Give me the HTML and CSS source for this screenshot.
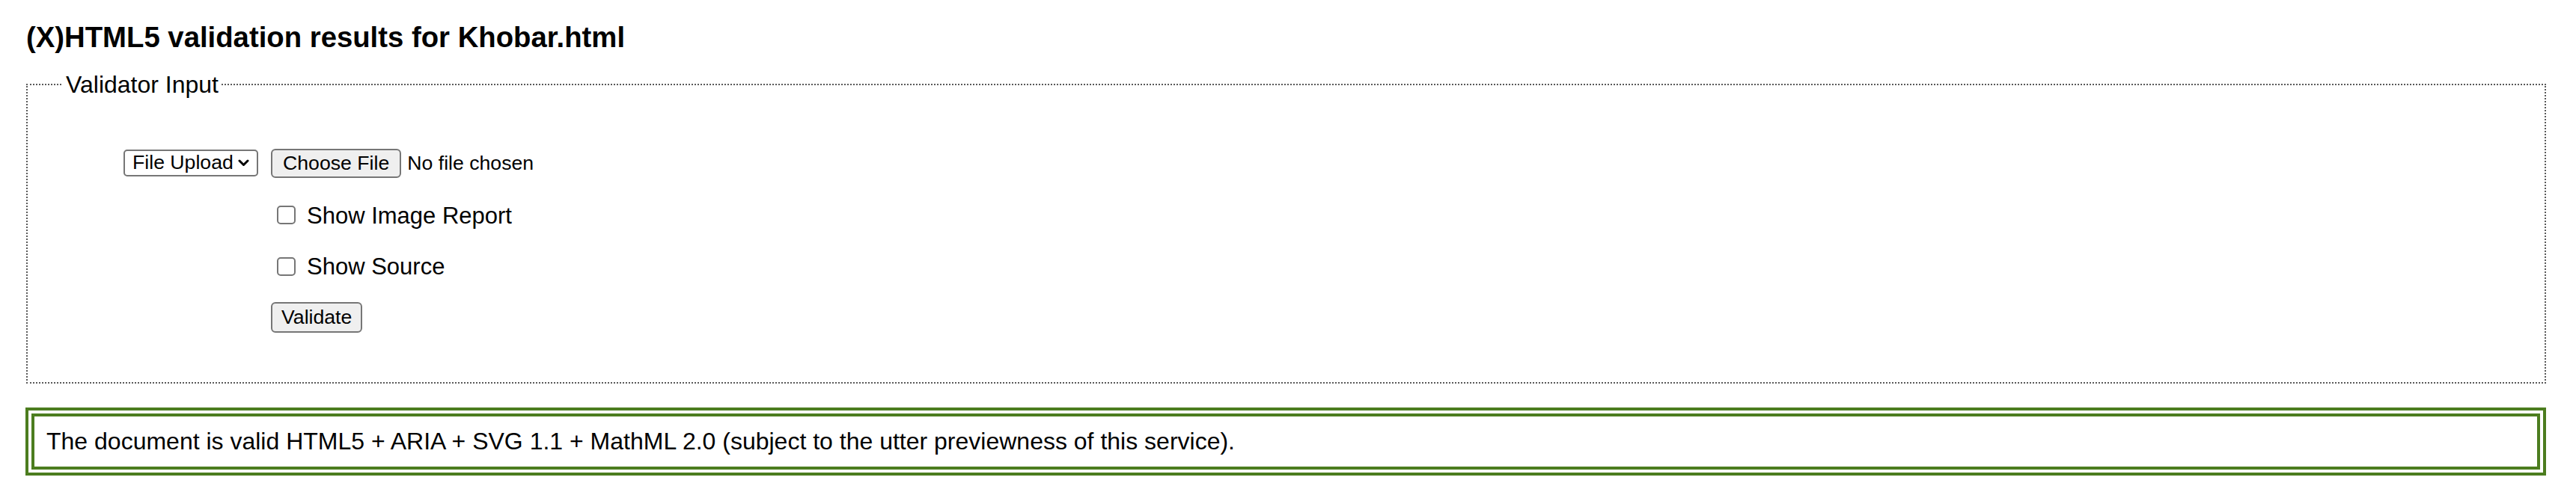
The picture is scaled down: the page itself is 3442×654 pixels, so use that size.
FILE: index.html
```html
<!DOCTYPE html>
<html lang="en">
<head>
<meta charset="utf-8">
<title>(X)HTML5 validation results for Khobar.html</title>
<link rel="stylesheet" href="styles.css">
</head>
<body>
<h1 class="title">(X)HTML5 validation results for Khobar.html</h1>
<fieldset class="input-box">
  <legend class="input-legend">Validator Input</legend>
  <div class="form-grid">
    <div class="source-cell">
      <div class="select"><span class="select-text">File Upload</span><svg class="chev" width="15" height="10" viewBox="0 0 15 10"><path d="M2 2 L7.5 7.5 L13 2" fill="none" stroke="#000" stroke-width="3" stroke-linecap="round" stroke-linejoin="round"/></svg></div>
    </div>
    <div class="controls">
      <div class="file-row"><button class="btn btn-file" type="button">Choose File</button><span class="file-status">No file chosen</span></div>
      <label class="check"><span class="box"></span>Show Image Report</label>
      <label class="check"><span class="box"></span>Show Source</label>
      <div class="submit-row"><button class="btn btn-validate" type="button">Validate</button></div>
    </div>
  </div>
</fieldset>
<div class="result">
  <p class="result-text">The document is valid HTML5 + ARIA + SVG 1.1 + MathML 2.0 (subject to the utter previewness of this service).</p>
</div>
</body>
</html>
```

FILE: styles.css
```css
html, body {
  margin: 0;
  padding: 0;
  background: #fff;
}
body {
  padding: 28px 40px 0 34px;
  font-family: "Liberation Sans", Arial, Helvetica, sans-serif;
  color: #000;
}
.title {
  margin: 0 0 23px 1px;
  font-size: 38.3px;
  font-weight: bold;
  line-height: 1.15;
}
.input-box {
  margin: 0 0 32px 1px;
  padding: 0 0 66px 0;
  border: 2px dotted #5a5a5a;
  min-width: 0;
}
.input-legend {
  margin-left: 47px;
  padding: 0 4px;
  font-size: 32px;
  line-height: 1.15;
}
.form-grid {
  display: grid;
  grid-template-columns: 180px auto;
  column-gap: 17px;
  padding-left: 128px;
  margin-top: 67px;
  align-items: start;
}
.source-cell {
  padding-top: 1px;
}
.select {
  box-sizing: border-box;
  height: 36px;
  width: 180px;
  border: 2px solid #767676;
  border-radius: 5px;
  background: #fff;
  display: flex;
  align-items: center;
  padding: 0 8px 0 10px;
  font-size: 26.67px;
  white-space: nowrap;
  gap: 6px;
  overflow: hidden;
}
.select-text {
  flex: none;
}
.chev {
  display: block;
  flex: none;
  margin-top: 1px;
}
.controls {
  display: flex;
  flex-direction: column;
  align-items: flex-start;
  gap: 33px;
}
.file-row {
  display: flex;
  align-items: center;
  gap: 8px;
}
.btn {
  box-sizing: border-box;
  font-family: "Liberation Sans", Arial, Helvetica, sans-serif;
  font-size: 26.67px;
  color: #000;
  background: #efefef;
  border: 2px solid #767676;
  border-radius: 6px;
  padding: 0 14px;
  margin: 0;
  line-height: 1.15;
}
.btn-file {
  height: 39px;
}
.btn-validate {
  height: 41px;
  padding: 0 12px;
}
.file-status {
  font-size: 26.67px;
}
.check {
  display: flex;
  align-items: center;
  font-size: 31px;
  line-height: 1.15;
  gap: 15px;
  padding-left: 8px;
}
.box {
  box-sizing: border-box;
  width: 25px;
  height: 25px;
  border: 2px solid #767676;
  border-radius: 5px;
  background: #fff;
  margin-top: -2px;
}
.submit-row {
  margin-top: -4px;
}
.result {
  margin-left: 0;
  border: 12px double #4c7d1f;
  padding: 15px 16px;
  background: #fff;
}
.result-text {
  margin: 0;
  font-size: 32px;
  line-height: 1.15;
}
```
